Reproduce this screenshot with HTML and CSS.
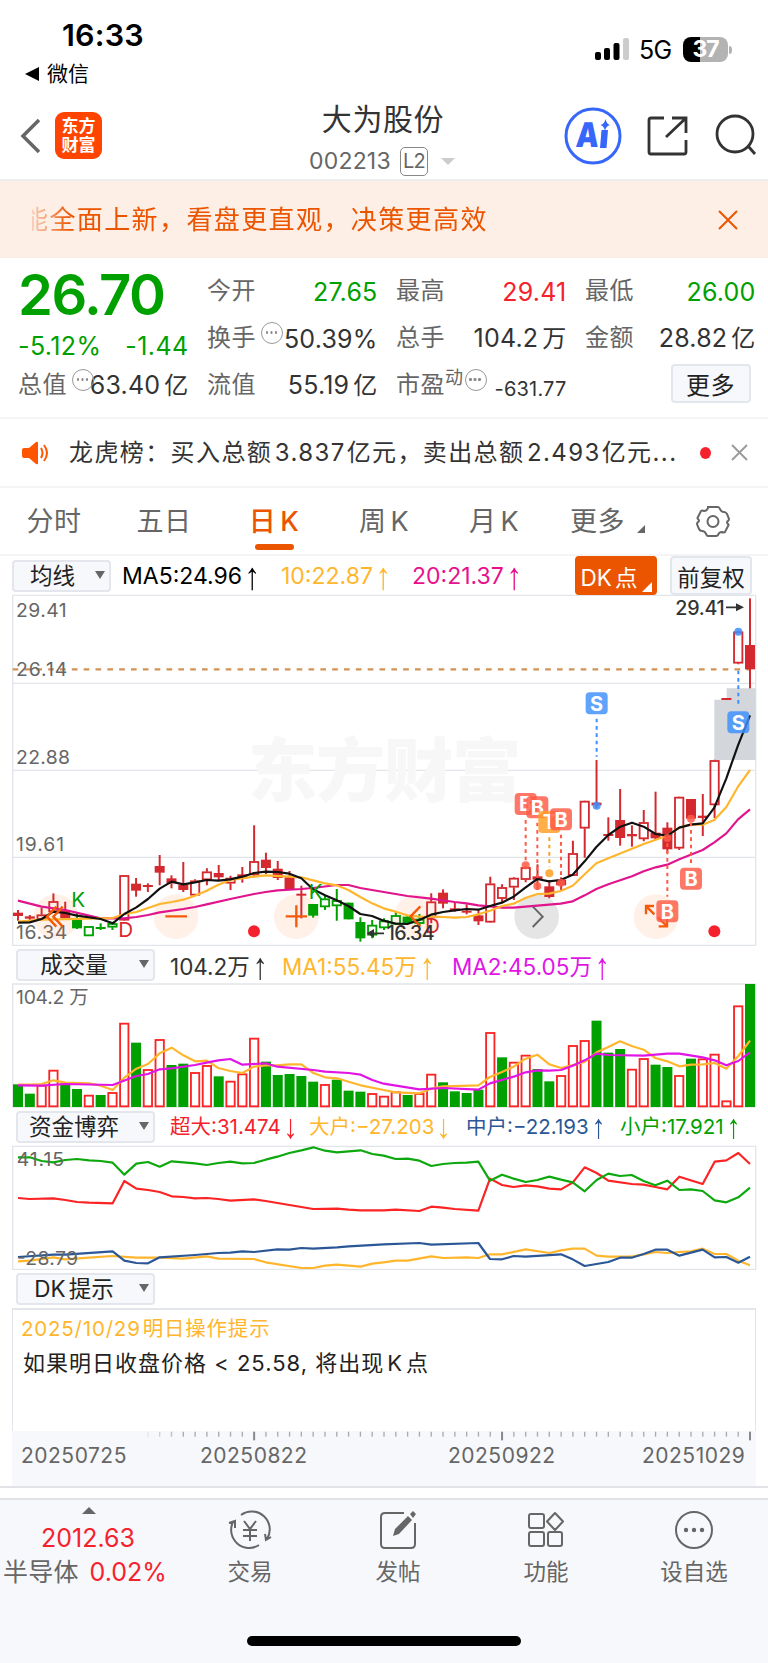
FILE: index.html
```
<!DOCTYPE html>
<html lang="zh-CN">
<head>
    <meta charset="utf-8"/>
    <title>大为股份 002213</title>
    <link rel="stylesheet" href="styles.css">
</head>
<body>

<div class="status">
    <div class="status-left">
        <div class="time">16:33</div>
        <div class="back-app"><i></i>微信</div>
    </div>
    <div class="status-right">
        <svg width="34" height="24" viewBox="0 0 34 24">
            <rect x="0" y="15" width="6" height="8" rx="2"/>
            <rect x="9" y="11" width="6" height="12" rx="2"/>
            <rect x="18.500" y="6" width="6" height="17" rx="2"/>
            <rect x="28" y="1" width="6" height="22" rx="2" fill="#ccc"/>
        </svg>
        <span class="net">5G</span>
        <span class="battery">37</span>
    </div>
</div>

<div class="header">
    <div class="header-left">
        <svg width="21" height="36" viewBox="0 0 21 36" fill="none" stroke="#666" stroke-width="3.500"><path d="M19 2L3 18l16 16"/></svg>
        <div class="logo">东方<br>财富</div>
    </div>
    <div class="header-title">
        <h1>大为股份</h1>
        <div class="code"><span>002213</span><b>L2</b><i></i></div>
    </div>
    <div class="header-right">
        <svg width="58" height="58" viewBox="0 0 58 58">
            <circle cx="29" cy="29" r="27" fill="none" stroke="#3766fb" stroke-width="3"/>
            <text x="14" y="40" class="ai" textLength="23" lengthAdjust="spacingAndGlyphs">A</text>
            <path d="M37.500 23h6.500l-1.500 18h-6.500z" fill="#3766fb"/>
            <path d="M41.500 12q1 5 4.500 6q-4 1-5 6q-1-5-4.500-6q4-1 5-6z" fill="#3766fb"/>
        </svg>
        <svg width="42" height="42" viewBox="0 0 42 42" fill="none" stroke="#333" stroke-width="2.800">
            <path d="M17 3H4q-2 0-2 2v32q0 2 2 2h33q2 0 2-2V25M25 3h14v15M39 3L19 22"/>
        </svg>
        <svg width="44" height="44" viewBox="0 0 44 44" fill="none" stroke="#333" stroke-width="2.800">
            <circle cx="21" cy="20" r="18"/><path d="M34 32l7 8"/>
        </svg>
    </div>
</div>

<div class="banner">
    <div class="banner-text">能全面上新，看盘更直观，决策更高效</div>
    <svg width="20" height="20" viewBox="0 0 20 20" stroke="#eb5500" stroke-width="2"><path d="M1 1l18 18M19 1L1 19"/></svg>
</div>

<div class="quote">
    <div class="price">
        <div class="now">26.70</div>
        <div class="change"><span>-5.12%</span><span>-1.44</span></div>
    </div>
    <div class="cell"><label>今开</label><span class="green">27.65</span></div>
    <div class="cell"><label>最高</label><span class="red">29.41</span></div>
    <div class="cell"><label>最低</label><span class="green">26.00</span></div>
    <div class="cell"><label>换手</label><i class="tip"></i><span>50.39%</span></div>
    <div class="cell"><label>总手</label><span>104.2<em>万</em></span></div>
    <div class="cell"><label>金额</label><span>28.82<em>亿</em></span></div>
    <div class="cell"><label>总值</label><i class="tip"></i><span>63.40<em>亿</em></span></div>
    <div class="cell"><label>流值</label><span>55.19<em>亿</em></span></div>
    <div class="cell pe"><label>市盈<sup>动</sup></label><i class="tip"></i><span>-631.77</span></div>
    <div class="cell more"><button>更多</button></div>
</div>

<div class="news">
    <svg width="28" height="24" viewBox="0 0 28 24">
        <path d="M2 7h5l7-6q2-1 2 1v20q0 2-2 1l-7-6H2q-2 0-2-2V9q0-2 2-2z" fill="#ff5500"/>
        <path d="M19 7q3 5 0 10M22 4q6 8 0 16" fill="none" stroke="#ff5500" stroke-width="2"/>
    </svg>
    <div class="news-text">龙虎榜：买入总额<span>3.837</span>亿元，卖出总额<span>2.493</span>亿元...</div>
    <i class="dot"></i>
    <svg width="17" height="17" viewBox="0 0 17 17" stroke="#999" stroke-width="1.800"><path d="M1 1l15 15M16 1L1 16"/></svg>
</div>

<div class="tabs">
    <div class="tab">分时</div>
    <div class="tab">五日</div>
    <div class="tab active">日<span>K</span></div>
    <div class="tab">周<span>K</span></div>
    <div class="tab">月<span>K</span></div>
    <div class="tab tab-more">更多<i></i></div>
    <svg width="34" height="32" viewBox="0 0 34 32" fill="none" stroke="#666" stroke-width="2">
        <path d="M12 2h10q1 0 2 2q1 3 4 3q2 0 3 2l2 5q0 1-1 2q-2 1 0 3q1 1 0 2l-3 6q-1 1-3 0q-3 0-4 3q-1 1-2 1H12q-1 0-2-2q-1-3-4-3q-2 0-3-2l-2-5q0-1 1-2q2-1 0-3q-1-1 0-2l3-6q1-1 3 0q3 0 4-3z"/>
        <circle cx="17" cy="16.500" r="5.500"/>
    </svg>
</div>

<div class="legend legend-main">
    <button class="select small">均线</button>
    <span class="l1">MA5:24.96<i>↑</i></span>
    <span class="l2 orange">10:22.87<i>↑</i></span>
    <span class="l3 pink">20:21.37<i>↑</i></span>
    <button class="dk">DK<em>点</em></button>
    <button class="fq">前复权</button>
</div>

<!-- 所有图表坐标单位为 1/3 像素 -->
<svg class="chart" width="768" height="351" viewBox="0 15 2304 1053" id="kline">
    <path class="grid" d="M38 16H2267V1066H38zM38 280H2267M38 541H2267M38 802H2267"/>
    <text class="watermark" x="744" y="618" textLength="820">东方财富</text>
    <path d="M2143 329h37v-34h87v215h-124z" fill="#d3d7dc"/>
    <path d="M38 238H2250" stroke="#d09355" stroke-width="7" stroke-dasharray="17 18.500"/>
    <g class="scale">
        <text x="48" y="80" textLength="152">29.41</text>
        <text x="48" y="259" textLength="154">26.14</text>
        <text x="48" y="522" textLength="162">22.88</text>
        <text x="48" y="784" textLength="144">19.61</text>
        <text x="48" y="1046" textLength="154">16.34</text>
    </g>
    <g fill="#ff7730" fill-opacity=".11">
        <circle cx="168" cy="980" r="67"/>
        <circle cx="528" cy="980" r="67"/>
        <circle cx="889" cy="980" r="67"/>
        <circle cx="1250" cy="980" r="67"/>
        <circle cx="1968" cy="980" r="67"/>
        <circle cx="1610" cy="980" r="67" fill="#111"/>
    </g>
    <g id="candles"></g>
    <g id="ma"></g>
    <g fill="none" stroke="#f45a0a" stroke-width="7">
        <path d="M169 950l-28 30 28 30M188 950l-28 30 28 30M496 979h65M857 979h64M889 946v66M1261 949l-29 30 29 31"/>
        <path d="M1962 948h-24v25M1939 949l24 24M1976 1009h25v-25M2000 1008l-26-26"/>
        <path d="M1598 949l30 31-30 31" stroke="#666" stroke-width="6"/>
    </g>
    <circle cx="762" cy="1024" r="18" fill="#f5222d"/>
    <circle cx="2143" cy="1024" r="18" fill="#f5222d"/>
    <g class="flag">
        <text x="214" y="950" fill="#00a000">K</text>
        <text x="355" y="1040" fill="#d7282d">D</text>
        <text x="926" y="927" fill="#00a000">K</text>
        <text x="1275" y="1030" fill="#d7282d">D</text>
    </g>
    <g class="peak">
        <text x="1160" y="1050" textLength="144">16.34</text>
        <text x="2026" y="74" textLength="148">29.41</text>
        <path d="M1104 1030h48M2178 52h40" stroke="#333" stroke-width="5"/>
        <path d="M1100 1030l22-13v26zM2232 52l-24-12v24z"/>
    </g>
    <g id="marks"></g>
</svg>

<div class="legend legend-volume">
    <button class="select">成交量</button>
    <span class="v1">104.2万<i>↑</i></span>
    <span class="v2 orange">MA1:55.45万<i>↑</i></span>
    <span class="v3 magenta">MA2:45.05万<i>↑</i></span>
</div>

<svg class="chart" width="768" height="123" viewBox="0 132 2304 369" id="volume">
    <path class="grid" d="M38 132H2267V501H38z"/>
    <text class="scale" x="48" y="191" textLength="218">104.2 万</text>
    <g id="bars"></g>
    <g id="vma"></g>
</svg>

<div class="legend legend-fund">
    <button class="select">资金博弈</button>
    <span class="f1 red">超大:31.474<i>↓</i></span>
    <span class="f2 orange">大户:−27.203<i>↓</i></span>
    <span class="f3 blue">中户:−22.193<i>↑</i></span>
    <span class="f4 green">小户:17.921<i>↑</i></span>
</div>

<svg class="chart" width="768" height="123" viewBox="0 108 2304 369" id="fund">
    <path class="grid" d="M38 109H2267V478H38z"/>
    <g id="funds"></g>
    <g class="scale">
        <text x="50" y="167" textLength="142">41.15</text>
        <text x="50" y="465" textLength="184">-28.79</text>
    </g>
</svg>

<div class="legend">
    <button class="select">DK<em>提示</em></button>
</div>

<div class="tips">
    <p class="orange"><span>2025/10/29</span>明日操作提示</p>
    <p class="rule">如果明日收盘价格 &lt; 25.58, 将出现<span>K</span>点</p>
</div>

<div class="axis">
    <svg width="744" height="12" viewBox="36 0 2232 36" id="ticks"></svg>
    <div class="dates"><span>20250725</span><span>20250822</span><span>20250922</span><span>20251029</span></div>
</div>

<div class="split"></div>

<div class="nav">
    <div class="nav-index">
        <i></i>
        <div class="red">2012.63</div>
        <div class="sector">半导体<span class="red">0.02%</span></div>
    </div>
    <div class="nav-item">
        <svg width="44" height="40" viewBox="0 0 44 40">
            <path d="M13 5A18 18 0 0 1 39 29M31 35A18 18 0 0 1 5 12M1 13l6-2v7M43 27l-5 3-1-6M16 11l6 8 6-8M22 19v12M15 20h14M15 26h14"/>
        </svg>
        交易
    </div>
    <div class="nav-item">
        <svg width="44" height="40" viewBox="0 0 44 40">
            <path d="M28 3H9q-4 0-4 4v27q0 4 4 4h26q4 0 4-4V13"/>
            <path d="M17 26l2-7L32 6l4 4-13 14zM34 4l3-3 3 3-3 4z" fill="#666" stroke="none"/>
        </svg>
        发帖
    </div>
    <div class="nav-item">
        <svg width="44" height="40" viewBox="0 0 44 40">
            <rect x="5" y="4" width="15" height="14" rx="2"/><rect x="5" y="22" width="15" height="14" rx="2"/>
            <rect x="24" y="22" width="14" height="14" rx="2"/><path d="M31 3l8 8.500-8 8.500-8-8.500z" stroke-linejoin="round"/>
        </svg>
        功能
    </div>
    <div class="nav-item">
        <svg width="44" height="40" viewBox="0 0 44 40">
            <circle cx="22" cy="20" r="18"/>
            <g fill="#666" stroke="none"><circle cx="14" cy="20" r="2.200"/><circle cx="22" cy="20" r="2.200"/><circle cx="30" cy="20" r="2.200"/></g>
        </svg>
        设自选
    </div>
</div>
<div class="home"><i></i></div>

<script src="main.js"></script>
</body>
</html>
```
FILE: styles.css
```
* {
    box-sizing: border-box;
}

body {
    margin: 0;
    width: 768px;
    background: #fff;
    color: #333;
    font-family: Inter, "Noto Sans CJK SC", sans-serif;
    font-size: 24px;
    line-height: 1.2;
}

i, em {
    font-style: normal;
}

button {
    padding: 0;
    font-family: inherit;
    color: #222;
    background: #f7f8fb;
    border: 2px solid #e3e6ec;
    border-radius: 4px;
}

svg {
    display: block;
    flex: none;
}

.green { color: #00a000; }
.red { color: #f5222d; }
.orange { color: #ffb62c; }
.pink { color: #e8108c; }
.magenta { color: #e114e6; }
.blue { color: #2b5797; }

/* 状态栏 */
.status {
    display: flex;
    justify-content: space-between;
    height: 90px;
    color: #000;
}

.time {
    padding: 17px 0 0 62px;
    font-size: 30.500px;
    line-height: 36px;
    font-weight: 600;
    letter-spacing: .2px;
}

.back-app {
    display: flex;
    align-items: center;
    gap: 8px;
    padding-left: 25px;
    margin-top: 6px;
    font-size: 21px;
    line-height: 30px;
}

.back-app i {
    border: 7px solid transparent;
    border-right: 14px solid #000;
    border-left: 0;
}

.status-right {
    display: flex;
    align-items: center;
    height: 98px;
    padding-right: 36px;
}

.net {
    width: 43px;
    padding: 2px 0 0 10px;
    margin-right: 11px;
    font-size: 25px;
    letter-spacing: -.7px;
}

.status-right svg {
    margin-left: auto;
}

.battery {
    position: relative;
    width: 45px;
    height: 25px;
    margin-right: 4px;
    border-radius: 8px;
    background: linear-gradient(90deg, #000 37%, #b3b3b3 37%);
    color: #fff;
    font-size: 23px;
    font-weight: 700;
    line-height: 25px;
    text-align: center;
    letter-spacing: -1px;
}

.battery::after {
    content: "";
    position: absolute;
    right: -4px;
    top: 9px;
    width: 3px;
    height: 8px;
    border-radius: 0 3px 3px 0;
    background: #b3b3b3;
}

/* 标题栏 */
.header {
    display: grid;
    grid-template-columns: 260px 248px 260px;
    height: 91px;
    border-bottom: 2px solid #eee;
}

.header-left {
    display: flex;
    align-items: center;
    gap: 14px;
    padding: 2px 0 0 20px;
}

.logo {
    width: 47px;
    height: 47px;
    padding-top: 5px;
    border-radius: 9px;
    background: #ff4400;
    color: #fff;
    font-size: 17px;
    font-weight: 700;
    line-height: 19px;
    text-align: center;
}

.header-title h1 {
    margin: 11px 0 0 -2px;
    font-size: 30px;
    font-weight: 400;
    letter-spacing: .6px;
    line-height: 36px;
    text-align: center;
}

.code {
    display: flex;
    align-items: center;
    margin: 10px 0 0 49px;
    font-size: 23px;
    letter-spacing: .2px;
    color: #666;
}

.code b {
    width: 28px;
    height: 29px;
    margin-left: 9px;
    border: 1.500px solid #888;
    border-radius: 5px;
    font-size: 20px;
    font-weight: 400;
    line-height: 26px;
    text-align: center;
    letter-spacing: -1px;
}

.code i {
    margin-left: 13px;
    border: 7px solid transparent;
    border-top: 7px solid #ccc;
    border-bottom: 0;
}

.header-right {
    display: flex;
    align-items: center;
    gap: 25px;
    padding: 2px 0 0 56px;
}

.ai {
    font-size: 34px;
    font-weight: 900;
    fill: #3766fb;
    transform: skewX(-4deg);
}

/* 公告 */
.banner {
    display: flex;
    align-items: center;
    justify-content: space-between;
    height: 77px;
    padding: 0 30px 0 32px;
    background: #fdeee6;
}

.banner-text {
    overflow: hidden;
    white-space: nowrap;
    text-indent: -10px;
    font-size: 26px;
    letter-spacing: 1.400px;
    color: #eb5500;
    mask-image: linear-gradient(90deg, rgba(0,0,0,.2), #000 38px);
}

/* 行情 */
.quote {
    display: grid;
    grid-template-columns: repeat(4, 170.500px);
    grid-template-rows: 47px 47px 47px;
    column-gap: 18.500px;
    height: 161px;
    padding: 10px 0 0 18px;
    border-bottom: 2px solid #f4f4f5;
}

.price {
    grid-row: span 2;
    color: #00a000;
}

.now {
    height: 54px;
    font-size: 56px;
    font-weight: 600;
    line-height: 54px;
    letter-spacing: -1.500px;
}

.change {
    display: flex;
    justify-content: space-between;
    margin-top: 9px;
    font-size: 25px;
    letter-spacing: .4px;
}

.cell {
    display: flex;
    align-items: center;
    min-width: 0;
    white-space: nowrap;
    font-size: 25px;
    letter-spacing: .2px;
}

.cell label {
    font-size: 24px;
    letter-spacing: .5px;
    color: #666;
}

.cell span {
    margin-left: auto;
}

.cell em {
    margin-left: 4px;
    font-size: 24px;
}

.tip {
    position: relative;
    flex: none;
    width: 22px;
    height: 22px;
    margin: -11px -12px 0 5px;
    border: 1.800px solid #999;
    border-radius: 50%;
}

.tip::after {
    content: "";
    position: absolute;
    left: 3.500px;
    top: 8px;
    width: 2.500px;
    height: 2.500px;
    border-radius: 50%;
    background: #888;
    box-shadow: 4.500px 0 #888, 9px 0 #888;
}

.cell sup {
    font-size: 18px;
    line-height: 0;
    vertical-align: 9px;
}

.pe .tip {
    margin: -11px 0 0 1px;
}

.pe span {
    padding-top: 6px;
    font-size: 20px;
}

.more button {
    width: 80px;
    height: 39px;
    margin: -5px 5px 0 auto;
    font-size: 24px;
    letter-spacing: .5px;
}

/* 龙虎榜 */
.news {
    display: flex;
    align-items: center;
    height: 69px;
    padding: 0 20px 0 22px;
    border-bottom: 2px solid #f4f4f5;
}

.news-text {
    width: 627px;
    padding: 1px 0 0 19px;
    white-space: nowrap;
    font-size: 24px;
    letter-spacing: 1.400px;
}

.news-text span {
    margin: 0 1px 0 2.500px;
}

.dot {
    width: 12px;
    height: 12px;
    margin: 0 20px 0 23px;
    border-radius: 50%;
    background: #f5222d;
}

/* 周期 */
.tabs {
    display: flex;
    align-items: center;
    height: 68px;
    margin-left: -1px;
    border-bottom: 2px solid #f4f4f5;
}

.tab {
    position: relative;
    flex: none;
    width: 110px;
    height: 68px;
    line-height: 69px;
    text-align: center;
    font-size: 27px;
    letter-spacing: .5px;
    color: #666;
}

.tab span {
    margin-left: 4px;
}

.tab.active {
    color: #eb5500;
    font-weight: 500;
}

.tab.active::after {
    content: "";
    position: absolute;
    left: 36px;
    bottom: 5px;
    width: 39px;
    height: 6px;
    border-radius: 3px;
    background: #eb5500;
}

.tab-more {
    width: 147px;
    padding-left: 21px;
    text-align: left;
}

.tab-more i {
    position: absolute;
    left: 88px;
    top: 38px;
    border: 4px solid #666;
    border-top-color: transparent;
    border-left-color: transparent;
}

/* 指标行 */
.legend {
    display: flex;
    align-items: center;
    height: 39px;
    padding-left: 16px;
    white-space: nowrap;
    font-size: 22px;
}

.legend span {
    flex: none;
    padding-top: 2px;
}

.legend i {
    display: inline-block;
    margin-left: 4px;
    font-family: "Liberation Sans", sans-serif;
    font-size: 1.1em;
    line-height: 20px;
    transform: scale(1.25, 1.5);
}

.legend-main {
    padding-left: 12px;
    color: #000;
    font-size: 23px;
}

.legend-volume {
    height: 38px;
    font-size: 22.500px;
}

.legend-fund {
    font-size: 20.500px;
}

.select {
    position: relative;
    flex: none;
    width: 139px;
    height: 32px;
    margin-right: 15px;
    padding-right: 23px;
    font-size: 22.500px;
    line-height: 26px;
}

.select em {
    margin-left: 3px;
}

.select::after {
    content: "";
    position: absolute;
    right: 4px;
    top: 9px;
    border: 5px solid transparent;
    border-top: 8px solid #666;
    border-bottom: 0;
}

.select.small {
    width: 99px;
    margin-right: 11px;
    padding-right: 18px;
}

.l1 { width: 159px; }
.l2 { width: 131px; }
.l3 { width: 163px; }
.v1 { width: 112px; }
.v2 { width: 170px; }
.f1 { width: 139px; }
.f2 { width: 157px; }
.f3 { width: 154px; }

.dk, .fq {
    position: relative;
    width: 82px;
    height: 39px;
    font-size: 22.500px;
}

.dk {
    padding-right: 14px;
    background: #eb5500;
    border-color: #eb5500;
    color: #fff;
}

.dk em {
    margin-left: 3px;
}

.dk::after {
    content: "";
    position: absolute;
    right: 3px;
    bottom: 1px;
    border: 5.500px solid #fff;
    border-top-color: transparent;
    border-left-color: transparent;
}

.fq {
    margin-left: 13px;
}

/* 图表 */
.chart {
    overflow: visible;
}

.grid {
    fill: none;
    stroke: #e2e5e9;
    stroke-width: 4;
}

.scale {
    font-size: 58px;
    fill: #666;
}

.watermark {
    font-size: 208px;
    font-weight: 900;
    fill: #f7f7f7;
}

.flag {
    font-size: 62px;
}

.peak {
    font-size: 59px;
    font-weight: 500;
    fill: #333;
}

.mark {
    font-size: 60px;
    font-weight: 700;
    fill: #fff;
    text-anchor: middle;
}

.line {
    fill: none;
    stroke-width: 6.500;
    stroke-linejoin: round;
}

/* DK 提示 */
.tips {
    height: 123px;
    margin: 0 12px;
    padding: 6px 0 0 8px;
    border: solid #e2e5e9;
    border-width: 2px 1.500px 0;
}

.tips p {
    margin: 0;
    font-size: 20.500px;
    line-height: 25px;
    letter-spacing: .8px;
}

.tips p span {
    margin-right: 2px;
}

.tips .rule {
    margin-top: 10px;
    padding-left: 2px;
    font-size: 22px;
    letter-spacing: 1px;
    color: #222;
}

.tips .rule span {
    margin: 0 3px;
}

.axis {
    height: 55px;
    margin: 0 12px;
    background: #f7f8fb;
}

.dates {
    display: grid;
    grid-template-columns: 179px 248px 194px 110px;
    padding: 0 0 0 9px;
    font-size: 21px;
    letter-spacing: .5px;
    color: #666;
}

.split {
    height: 14px;
    border: solid #e3e3e7;
    border-width: 2px 0;
}

/* 底部导航 */
.nav {
    display: flex;
    height: 124px;
    background: #f7f8fb;
    color: #666;
    font-size: 22.500px;
}

.nav-index {
    width: 176px;
    text-align: center;
    font-size: 25px;
}

.nav-index i {
    display: block;
    width: 0;
    margin: 7px auto 0 82px;
    border: 7px solid transparent;
    border-bottom: 7px solid #666;
    border-top: 0;
}

.nav-index .red {
    margin-top: 9px;
}

.nav-index .sector {
    display: flex;
    padding-left: 3px;
    margin-top: 4px;
    letter-spacing: .2px;
}

.nav-index .sector span {
    margin: 0 0 0 11px;
    letter-spacing: 0;
}

.nav-item {
    width: 148px;
    padding-top: 10px;
    text-align: center;
}

.nav-item svg {
    margin: 0 auto 8px;
    fill: none;
    stroke: #666;
    stroke-width: 2;
}

.home {
    height: 39px;
    padding-top: 12px;
    background: #f7f8fb;
}

.home i {
    display: block;
    width: 274px;
    height: 10px;
    margin: 0 auto;
    border-radius: 5px;
    background: #000;
}
```
FILE: main.js
```
// 坐标单位 1/3 像素
const RED = '#d42a2f', GREEN = '#00a000';
const cx = i => 54 + 35.42 * i;
const put = (id, html) => document.getElementById(id).innerHTML = html;

// [类型, 最高, 最低, 实体上, 实体下]  r/R 红空/红实  g/G 绿空/绿实
const candles = [
    ['R',960,992,968,978],['R',975,990,979,986],['r',953,990,974,989],['r',910,966,934,966],['R',935,984,961,984],
    ['G',966,1017,989,1015],['g',1009,1038,1009,1038],['G',1000,1020,1011,1017],['g',995,1020,1000,1012],['r',855,992,856,991],
    ['R',864,920,881,902],['R',880,906,885,891],['R',795,886,828,848],['R',856,895,865,880],['R',816,906,884,900],
    ['r',868,917,872,916],['r',835,886,845,870],['R',825,870,849,862],['r',857,900,864,880],['R',831,878,853,866],
    ['r',706,862,814,855],['R',788,852,809,834],['R',813,870,836,864],['R',843,898,862,898],['R',887,985,911,917],
    ['G',942,983,942,977],['g',915,960,926,951],['g',897,992,931,948],['G',938,988,938,988],['G',982,1055,996,1045],
    ['g',990,1045,1005,1036],['g',985,1020,992,1014],['g',965,1005,976,1003],['G',975,1002,980,1000],['g',972,1005,987,1001],
    ['r',910,1000,935,982],['R',898,955,908,941],['R',937,965,955,963],['R',943,973,962,968],['R',960,1005,976,994],
    ['r',860,998,881,997],['r',883,937,892,926],['r',862,930,864,892],['r',828,877,832,869],['R',823,900,859,869],
    ['R',870,925,889,921],['R',862,900,869,886],['r',752,858,790,857],['r',632,803,633,715],['R',510,655,638,646],
    ['R',682,752,732,738],['R',597,767,690,744],['R',706,770,732,739],['r',660,754,697,747],['R',605,750,728,745],
    ['R',697,790,713,778],['r',620,780,621,775],['R',627,686,627,686],['R',612,738,677,684],['r',509,685,511,645],
    ['R',324,330,324,330],['r',122,223,125,220],['R',25,295,165,238]
];

put('candles', candles.map(([t, hi, lo, top, bot], i) => {
    const c = t.toUpperCase() === 'R' ? RED : GREEN, x = cx(i);
    if (t === 'R' || t === 'G') {
        return `<path d="M${x} ${hi}V${lo}" stroke="${c}" stroke-width="6"/>` +
            `<rect x="${x - 15}" y="${top}" width="30" height="${bot - top}" fill="${c}"/>`;
    }
    return `<path d="M${x} ${hi}V${top}M${x} ${bot}V${lo}" stroke="${c}" stroke-width="6"/>` +
        `<rect x="${x - 12.5}" y="${top + 2}" width="25" height="${Math.max(bot - top - 4, 2)}" fill="none" stroke="${c}" stroke-width="5.5"/>`;
}).join(''));

const line = (pts, color) => `<polyline class="line" points="${pts}" stroke="${color}"/>`;

const ma5 = '54,998 89,997 125,987 160,965 196,969 231,977 302,987 338,1000 373,972 409,952 444,927 479,896 515,875 550,883 585,877 620,870 655,872 691,868 727,860 762,849 797,845 833,846 868,851 904,865 939,898 975,916 1010,931 1045,948 1081,972 1116,978 1151,992 1187,1001 1222,1002 1258,990 1293,974 1329,966 1364,961 1400,957 1435,959 1470,948 1506,938 1541,920 1576,893 1612,867 1647,874 1682,870 1718,854 1754,814 1789,771 1825,735 1861,710 1896,698 1931,710 1967,732 2002,737 2038,713 2072,704 2108,700 2143,653 2179,565 2214,466 2250,376';
const ma10 = '54,995 125,989 302,985 338,984 373,972 409,966 444,954 479,942 515,936 550,929 585,917 620,902 655,884 691,870 762,860 797,856 868,860 904,862 975,880 1010,886 1045,900 1081,921 1116,940 1151,955 1187,965 1222,976 1258,980 1329,981 1364,983 1400,981 1435,973 1470,962 1506,948 1541,941 1576,924 1612,912 1647,911 1682,903 1718,887 1754,853 1789,820 1825,805 1931,762 2002,737 2038,712 2072,704 2108,704 2143,690 2179,651 2214,590 2250,540';
const ma20 = '54,932 125,950 196,960 267,977 302,985 373,985 409,981 444,975 479,967 550,957 585,951 620,943 691,927 762,912 797,906 833,901 904,897 939,894 1010,885 1045,885 1081,894 1116,900 1187,912 1222,918 1293,926 1364,936 1400,940 1435,946 1470,949 1506,953 1541,953 1612,947 1682,941 1718,934 1754,916 1789,897 1825,883 1896,859 1931,844 1967,832 2002,824 2038,808 2108,780 2143,757 2179,730 2214,688 2250,658';
put('ma', line(ma20, '#e0148c') + line(ma10, '#ffb62c') + line(ma5, '#111'));

// 买卖点 [字, 方块中心x, 中心y, 虚线起, 虚线止, 圆点y, 颜色]
const marks = [
    ['B',1577,642,690,812,826,'#ff5a46'],['B',1612,652,698,870,888,'#ff5a46'],['T',1648,696,742,832,850,'#ff9e22'],
    ['B',1683,688,734,860,878,'#ff5a46'],['B',2073,866,698,820,686,'#ff5a46'],['B',2002,964,760,920,744,'#ff5a46'],
    ['S',1790,340,386,500,647,'#3c8ffd'],['S',2215,397,242,352,125,'#3c8ffd']
];
put('marks', marks.map(([s, x, y, a, b, d, c]) =>
    `<path d="M${x} ${a}V${b}" stroke="${c}" stroke-width="6" stroke-dasharray="11 11"/>` +
    `<circle cx="${x}" cy="${d}" r="12" fill="${c}" opacity=".85"/>` +
    `<rect x="${x - 33}" y="${y - 33}" width="66" height="66" rx="12" fill="${c}" opacity=".82"/>` +
    `<text class="mark" x="${x}" y="${y + 22}">${s}</text>`
).join(''));

// 成交量
const tops = [433,461,437,392,430,447,467,465,459,251,308,390,300,375,371,399,378,409,425,403,296,365,405,402,408,425,435,419,452,455,462,470,
    457,465,462,404,427,454,459,449,279,352,368,347,387,424,408,318,303,242,338,327,389,357,374,381,408,356,358,344,484,199,132];
const kinds = 'GGRRGGRGRRGRRGGRRGRRRGGGGGRGGGRRRGRRGGGGRGRRGGRRRGGGRRGGRGRRRRG';
put('bars', tops.map((y, i) => kinds[i] === 'G'
    ? `<rect x="${cx(i) - 15}" y="${y}" width="30" height="${501 - y}" fill="${GREEN}"/>`
    : `<rect x="${cx(i) - 12.5}" y="${y}" width="25" height="${499 - y}" fill="none" stroke="#fb2323" stroke-width="5.5"/>`
).join(''));
put('vma',
    line('54,434 89,434 125,432 160,421 196,428 267,430 302,437 338,450 373,413 409,386 444,372 479,340 515,323 550,346 585,364 620,362 655,384 691,393 727,399 762,380 797,376 832,376 868,373 904,373 940,399 975,412 1011,415 1046,425 1082,436 1151,450 1187,457 1258,460 1294,446 1329,439 1435,436 1470,411 1506,396 1541,380 1577,356 1612,344 1648,373 1683,384 1754,366 1790,337 1825,321 1860,304 1895,318 1931,329 1966,354 2002,364 2038,379 2073,374 2108,373 2144,369 2179,386 2215,348 2250,302', '#ffb62c') +
    line('54,436 125,437 196,432 338,435 409,408 444,402 479,388 515,385 585,375 620,368 655,361 691,357 727,374 797,370 832,380 940,390 975,395 1046,399 1082,404 1117,420 1151,431 1258,448 1329,444 1435,449 1470,430 1541,410 1577,397 1612,391 1648,392 1683,390 1718,377 1754,361 1790,341 1825,345 1931,347 2002,341 2038,341 2108,352 2144,361 2179,376 2215,363 2250,337', '#e114e6'));

// 资金博弈
put('funds',
    line('54,454 89,452 160,442 196,448 267,443 338,438 409,443 479,443 550,446 620,439 655,446 762,447 797,457 904,474 940,474 975,467 1011,464 1082,470 1117,461 1151,457 1187,452 1223,452 1294,439 1329,444 1400,442 1435,444 1470,433 1506,433 1577,418 1648,429 1683,421 1718,416 1754,416 1790,437 1825,440 1895,440 1931,433 1966,426 2002,429 2038,426 2073,424 2108,416 2144,432 2179,432 2215,452 2250,466', '#ffb62c') +
    line('54,441 160,434 196,434 338,424 373,452 409,459 444,460 479,442 585,435 655,429 691,428 727,424 762,426 832,418 868,419 904,414 940,416 1011,412 1046,409 1151,403 1258,399 1294,404 1435,399 1470,447 1506,448 1541,438 1577,440 1683,433 1718,448 1754,468 1825,456 1860,443 1895,443 1931,432 1966,419 2002,419 2038,437 2073,428 2108,419 2144,442 2179,441 2215,458 2250,440', '#2b5797') +
    line('54,264 89,267 160,265 196,270 231,276 267,278 338,280 373,213 409,236 444,240 479,246 515,259 550,261 585,265 620,264 655,267 691,272 762,268 797,273 868,285 940,297 1011,296 1046,299 1082,301 1151,301 1187,299 1258,303 1294,290 1329,293 1364,297 1435,302 1470,206 1506,225 1541,231 1577,226 1612,229 1648,236 1683,238 1718,218 1754,172 1790,189 1825,212 1895,222 1931,224 1966,231 2002,238 2038,200 2108,222 2144,155 2179,151 2215,129 2250,162', '#fb2323') +
    line('54,142 89,142 125,153 160,157 196,150 231,147 267,151 302,153 338,158 373,194 409,161 444,156 479,170 515,154 585,160 620,165 655,159 691,155 727,160 762,159 797,149 832,140 868,129 904,121 940,112 975,122 1011,127 1082,121 1117,132 1151,137 1187,147 1223,146 1258,152 1294,168 1329,162 1364,159 1400,158 1435,155 1470,212 1506,194 1541,206 1577,216 1612,210 1648,200 1683,209 1718,217 1754,244 1790,210 1825,191 1860,198 1895,195 1931,213 1966,226 2002,212 2038,240 2073,238 2108,243 2144,271 2179,277 2215,262 2250,233', '#0da80d'));

// 时间刻度
let ticks = '';
for (let i = 11; i < 63; i++) {
    const major = i === 20 || i === 41 || i === 62;
    ticks += `<path d="M${cx(i)} 2V${major ? 28 : 17}" stroke="${major ? '#888' : '#aaa'}" stroke-width="${major ? 6 : 4}" opacity="${Math.min(1, (i - 10) / 4)}"/>`;
}
put('ticks', ticks);
```
